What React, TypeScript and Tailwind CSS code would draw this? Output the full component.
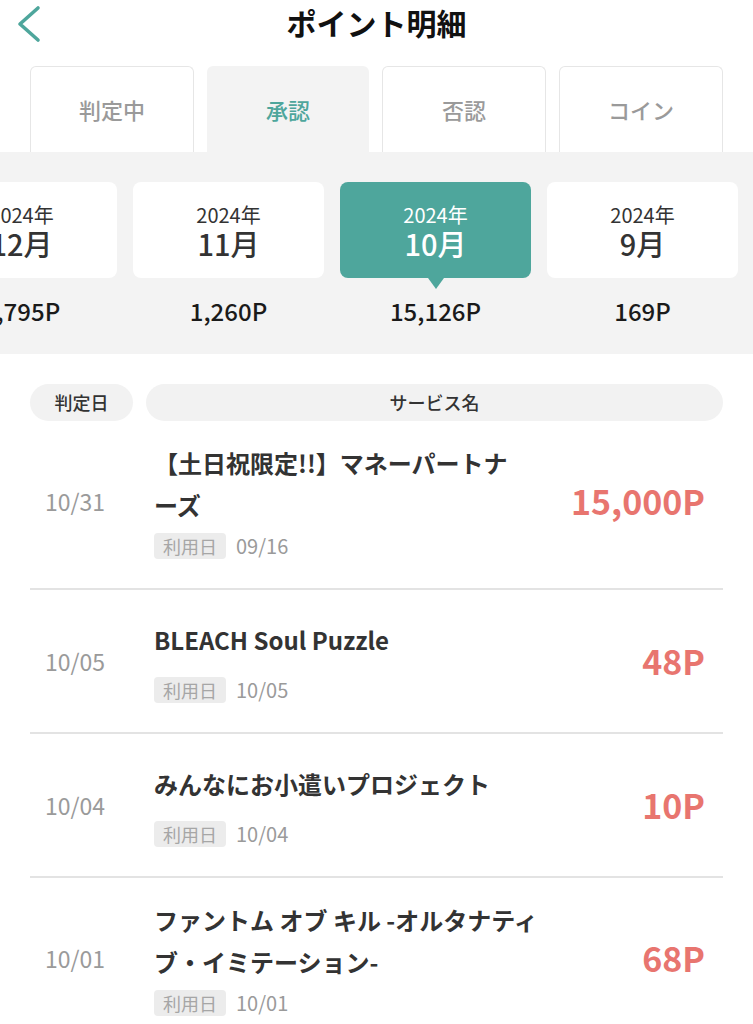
import React from 'react';

const tabs = ['判定中', '承認', '否認', 'コイン'];

const months = [
  { year: '2024年', month: '12月', points: '1,795P' },
  { year: '2024年', month: '11月', points: '1,260P' },
  { year: '2024年', month: '10月', points: '15,126P', active: true },
  { year: '2024年', month: '9月', points: '169P' },
];

type Row = {
  date: string;
  lines: string[];
  usedOn: string;
  points: string;
};

const rows: Row[] = [
  { date: '10/31', lines: ['【土日祝限定!!】マネーパートナ', 'ーズ'], usedOn: '09/16', points: '15,000P' },
  { date: '10/05', lines: ['BLEACH Soul Puzzle'], usedOn: '10/05', points: '48P' },
  { date: '10/04', lines: ['みんなにお小遣いプロジェクト'], usedOn: '10/04', points: '10P' },
  { date: '10/01', lines: ['ファントム オブ キル -オルタナティ', 'ブ・イミテーション-'], usedOn: '10/01', points: '68P' },
];

export default function App() {
  return (
    <div className="w-[753px] h-[1024px] overflow-hidden bg-white font-['Noto_Sans_CJK_JP',sans-serif] text-[#333]">
      {/* Header */}
      <div className="relative h-[44px] flex items-center justify-center">
        <svg className="absolute left-[15px] top-[5px]" width="28" height="38" viewBox="0 0 28 38" fill="none">
          <path d="M23 3 L5 19 L23 35" stroke="#4ea69c" strokeWidth="3.6" strokeLinecap="round" strokeLinejoin="round" />
        </svg>
        <h1 className="text-[30px] font-bold text-[#111] leading-none">ポイント明細</h1>
      </div>

      {/* Tabs */}
      <div className="flex gap-[13px] px-[30px] pt-[22px]">
        {tabs.map((t, i) => (
          <div
            key={t}
            className={
              i === 1
                ? 'flex-1 h-[86px] flex items-center justify-center rounded-t-md bg-[#f3f3f3] text-[22px] font-medium text-[#4ea69c]'
                : 'flex-1 h-[86px] flex items-center justify-center rounded-t-md border border-b-0 border-[#e6e6e6] bg-white text-[22px] font-medium text-[#9a9a9a]'
            }
          >
            {t}
          </div>
        ))}
      </div>

      {/* Month carousel */}
      <div className="bg-[#f3f3f3] h-[202px] pt-[30px] overflow-hidden">
        <div className="flex gap-[16px] ml-[-74px]">
          {months.map((m) => (
            <div key={m.month} className="w-[191px] shrink-0 flex flex-col items-center">
              <div
                className={
                  m.active
                    ? 'relative w-full h-[96px] rounded-lg bg-[#4ea69c] text-white flex flex-col items-center justify-center'
                    : 'relative w-full h-[96px] rounded-lg bg-white text-[#333] flex flex-col items-center justify-center'
                }
              >
                <span className="text-[20px] leading-[26px]">{m.year}</span>
                <span className="text-[29px] leading-[30px] font-medium">{m.month}</span>
                {m.active && (
                  <span className="absolute left-1/2 -translate-x-1/2 top-full w-0 h-0 border-l-[8px] border-r-[8px] border-t-[11px] border-l-transparent border-r-transparent border-t-[#4ea69c]" />
                )}
              </div>
              <div className="mt-[18px] text-[24px] leading-[30px] font-medium text-[#1a1a1a]">{m.points}</div>
            </div>
          ))}
        </div>
      </div>

      {/* List header */}
      <div className="flex gap-[13px] px-[30px] pt-[30px]">
        <div className="w-[103px] h-[37px] rounded-full bg-[#f2f2f2] flex items-center justify-center text-[18px] font-medium text-[#333]">
          判定日
        </div>
        <div className="flex-1 h-[37px] rounded-full bg-[#f2f2f2] flex items-center justify-center text-[18px] font-medium text-[#333]">
          サービス名
        </div>
      </div>

      {/* Rows */}
      <div className="mx-[30px]">
        {rows.map((r) => {
          const multi = r.lines.length > 1;
          return (
            <div
              key={r.date}
              className={
                multi
                  ? 'flex items-center border-b-2 border-[#e3e3e3] pt-[21px] pb-[29px]'
                  : 'flex items-center border-b-2 border-[#e3e3e3] pt-[29px] pb-[29px]'
              }
            >
              <div className="w-[103px] shrink-0 pl-[15px] text-[23px] leading-[30px] text-[#9a9a9a]">{r.date}</div>
              <div className="flex-1 pl-[21px]">
                <div className="text-[24px] leading-[42px] font-bold text-[#333] whitespace-nowrap">
                  {r.lines.map((l) => (
                    <div key={l}>{l}</div>
                  ))}
                </div>
                <div className={multi ? 'flex items-center gap-[10px] mt-[7px]' : 'flex items-center gap-[10px] mt-[16px]'}>
                  <span className="h-[26px] px-[9px] rounded bg-[#ececec] text-[18px] leading-[26px] text-[#a6a6a6]">利用日</span>
                  <span className="text-[20px] leading-[26px] text-[#9a9a9a]">{r.usedOn}</span>
                </div>
              </div>
              <div className="pr-[18px] text-[34px] leading-[40px] font-bold text-[#e8756f]">{r.points}</div>
            </div>
          );
        })}
      </div>
    </div>
  );
}
